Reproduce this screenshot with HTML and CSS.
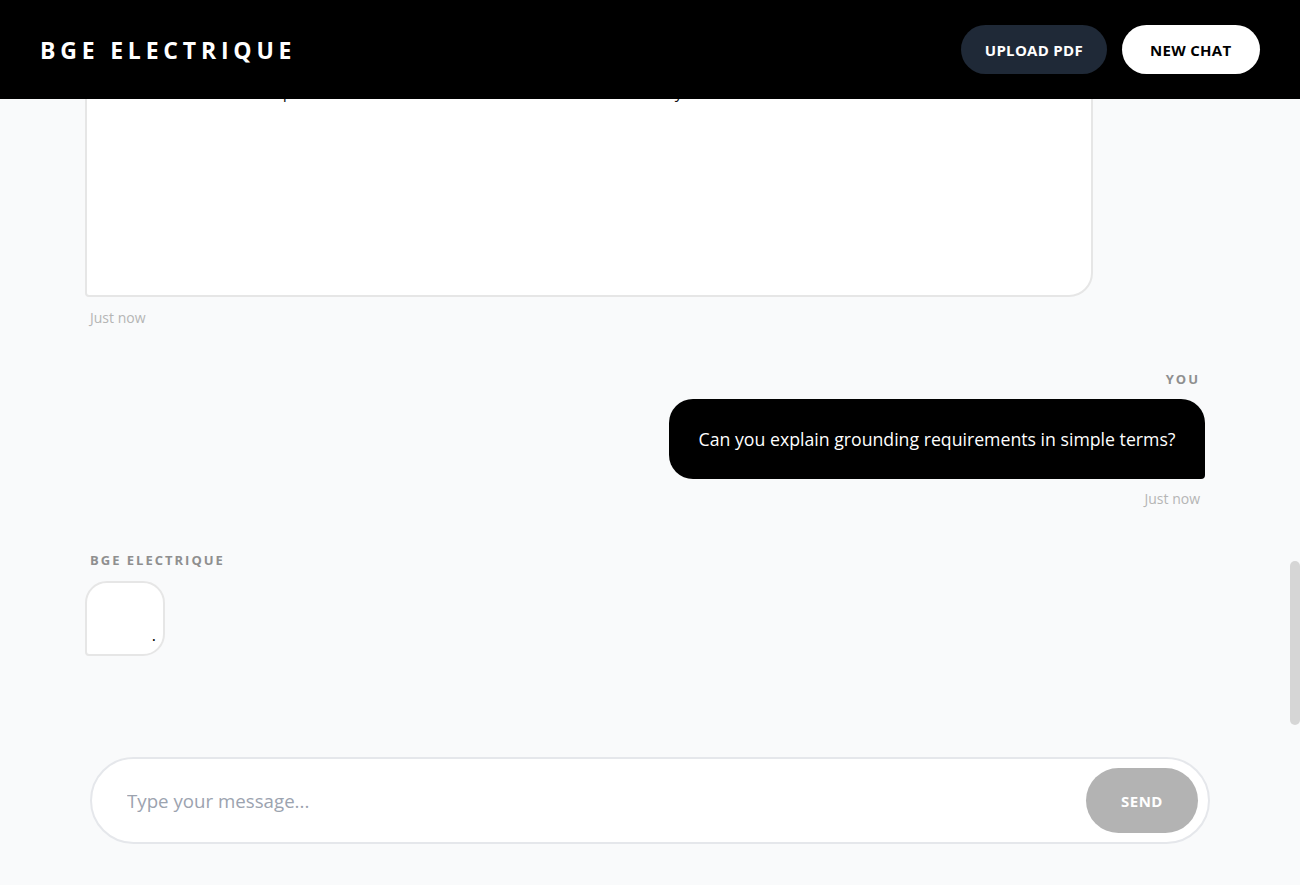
FILE: index.html
```html
<!DOCTYPE html>
<html lang="en">
<head>
<meta charset="utf-8">
<title>BGE Electrique</title>
<link rel="stylesheet" href="styles.css">
</head>
<body>
<div class="app">
  <header class="topbar">
    <div class="brand">BGE ELECTRIQUE</div>
    <div class="actions">
      <button class="btn btn-dark" type="button">UPLOAD PDF</button>
      <button class="btn btn-light" type="button">NEW CHAT</button>
    </div>
  </header>

  <div class="chat-wrap">
    <main class="chat">
      <div class="thread">
        <div class="msg msg-bot">
          <div class="label">BGE ELECTRIQUE</div>
          <div class="bubble bubble-bot"><div class="answer">Hello! I'm the BGE Electrique assistant. Upload a PDF of your electrical plans, code excerpts or specifications and ask me anything about them.</div></div>
          <div class="time">Just now</div>
        </div>

        <div class="msg msg-user">
          <div class="label">YOU</div>
          <div class="bubble bubble-user">What are the main safety requirements described in the document?</div>
          <div class="time">Just now</div>
        </div>

        <div class="msg msg-bot">
          <div class="label">BGE ELECTRIQUE</div>
          <div class="bubble bubble-bot"><div class="answer">Here is a summary of the main safety requirements described in the uploaded document:

1. Overcurrent protection
Every branch circuit must be protected by a circuit breaker or fuse rated for the conductor size. Breakers must be clearly labelled in the distribution panel so that each circuit can be identified and isolated quickly.

2. Residual current protection (GFCI / RCD)
Outlets located in bathrooms, kitchens, laundry rooms, garages and all outdoor locations require residual current protection with a trip threshold of 30 mA or less.

3. Conductor sizing
Copper conductors must be sized according to the load: 14 AWG for 15 A circuits, 12 AWG for 20 A circuits and 10 AWG for 30 A circuits. Aluminium conductors require an upsized gauge and approved connectors.

4. Grounding and bonding
All metallic enclosures, boxes and equipment frames must be connected to the equipment grounding conductor. Metal water and gas piping must be bonded to the main grounding electrode system.

5. Working clearances
A minimum clear working space of 900 mm in front of every panel must be maintained at all times, with adequate lighting and no storage in front of the equipment.

6. Installation and inspection
All work must be carried out by a licensed electrician and inspected before the installation is energized. Any modification to an existing installation requires a new permit.

Each of these rules helps reduce the risk of fire and shock in the home and yard.







</div></div>
          <div class="time">Just now</div>
        </div>

        <div class="msg msg-user">
          <div class="label">YOU</div>
          <div class="bubble bubble-user">Can you explain grounding requirements in simple terms?</div>
          <div class="time">Just now</div>
        </div>

        <div class="msg msg-bot">
          <div class="label">BGE ELECTRIQUE</div>
          <div class="bubble bubble-bot bubble-typing"><span class="typing">.</span></div>
        </div>
      </div>
    </main>
    <div class="rail" aria-hidden="true"><div class="thumb"></div></div>
  </div>

  <footer class="composer">
    <form class="input-bar">
      <input class="input" type="text" placeholder="Type your message...">
      <button class="send" type="button">SEND</button>
    </form>
  </footer>
</div>
</body>
</html>
```

FILE: styles.css
```css
html, body {
  margin: 0;
  height: 100%;
}

body {
  font-family: "Open Sans", "Noto Sans", sans-serif;
  background: #f9fafb;
  color: #111;
}

.app {
  display: flex;
  flex-direction: column;
  height: 100vh;
}

/* Header */
.topbar {
  flex: 0 0 99px;
  background: #000;
  display: flex;
  align-items: center;
  justify-content: space-between;
  padding: 0 40px;
}

.brand {
  color: #fff;
  font-weight: 700;
  font-size: 23px;
  letter-spacing: 4.8px;
}

.actions {
  display: flex;
  gap: 15px;
}

.btn {
  border: 0;
  border-radius: 999px;
  height: 49px;
  font-family: "Open Sans", sans-serif;
  font-weight: 700;
  font-size: 15px;
  letter-spacing: 0.3px;
  cursor: pointer;
}

.btn-dark {
  background: #1f2937;
  color: #fff;
  padding: 0 23.5px;
}

.btn-light {
  background: #fff;
  color: #000;
  padding: 0 28.5px;
}

/* Chat area */
.chat-wrap {
  flex: 1;
  min-height: 0;
  display: flex;
}

.chat {
  flex: 1;
  min-width: 0;
  overflow-y: auto;
  scrollbar-width: none;
  display: flex;
  flex-direction: column-reverse;
}

.chat::-webkit-scrollbar {
  display: none;
}

.rail {
  flex: 0 0 10px;
}

.thumb {
  margin-top: 462px;
  height: 164px;
  border-radius: 5px;
  background: #d6d6d6;
}

.thread {
  width: 100%;
  max-width: 1120px;
  margin: 0 auto;
  padding: 30px 0 69px;
  display: flex;
  flex-direction: column;
  gap: 43px;
}

.msg {
  display: flex;
  flex-direction: column;
  align-items: flex-start;
}

.msg-user {
  align-items: flex-end;
}

.label {
  font-size: 13px;
  line-height: 18px;
  font-weight: 700;
  letter-spacing: 2px;
  color: #8f8f8f;
  margin: 0 5px 12px;
}

.msg-user .label {
  margin-bottom: 11px;
}

.bubble {
  max-width: 90%;
  box-sizing: border-box;
  font-size: 16px;
  line-height: 24px;
}

.bubble-bot {
  background: #fff;
  border: 2px solid #e6e6e6;
  border-radius: 24px 24px 24px 4px;
  padding: 22px 28px 23px;
}

.answer {
  white-space: pre-wrap;
}

.bubble-user {
  background: #000;
  color: #fff;
  border-radius: 24px 24px 4px 24px;
  padding: 28px 29.5px;
  font-size: 17.7px;
}

.bubble-typing {
  width: 80px;
  height: 75px;
  padding: 0 7px 11px 0;
  display: flex;
  justify-content: flex-end;
  align-items: flex-end;
  border-radius: 22px 22px 22px 4px;
}

.typing {
  font-size: 16px;
  line-height: 1;
  color: #000;
}

.time {
  font-size: 14px;
  line-height: 18px;
  color: #b5b5b5;
  margin: 12px 5px 0;
}

.msg-user .time {
  margin-top: 11px;
}

/* Composer */
.composer {
  flex: 0 0 auto;
  padding: 32px 0 41px;
}

.input-bar {
  max-width: 1120px;
  height: 87px;
  margin: 0 auto;
  box-sizing: border-box;
  display: flex;
  align-items: center;
  background: #fff;
  border: 2px solid #e5e7eb;
  border-radius: 999px;
  padding: 9px 10px 9px 35px;
}

.input {
  flex: 1;
  min-width: 0;
  border: 0;
  outline: 0;
  background: transparent;
  font-family: "Open Sans", sans-serif;
  font-size: 18.7px;
  color: #111;
  padding: 0;
}

.input::placeholder {
  color: #9ca3af;
}

.send {
  width: 112px;
  height: 65px;
  border: 0;
  border-radius: 999px;
  background: #b3b3b3;
  color: #fff;
  font-family: "Open Sans", sans-serif;
  font-weight: 700;
  font-size: 15px;
  letter-spacing: 0.5px;
  cursor: pointer;
}
```
